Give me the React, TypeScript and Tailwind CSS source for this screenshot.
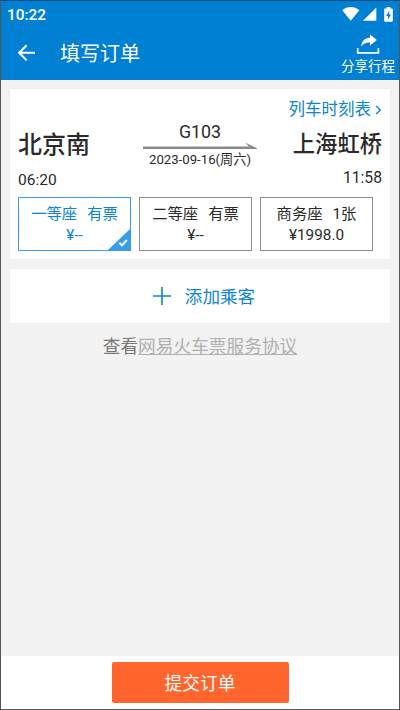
import { useState } from 'react';
import clsx from 'clsx';

interface Seat {
  name: string;
  stock: string;
  price: string;
}

const seats: Seat[] = [
  { name: '一等座', stock: '有票', price: '¥--' },
  { name: '二等座', stock: '有票', price: '¥--' },
  { name: '商务座', stock: '1张', price: '¥1998.0' },
];

function StatusBar() {
  return (
    <div className="flex h-[26px] shrink-0 items-center justify-between px-[6px] text-white">
      <span className="mt-px text-[15.4px] leading-[26px] font-medium">10:22</span>
      <div className="flex items-center">
        <svg width="18" height="14" viewBox="0 0 18 14" fill="currentColor">
          <path d="M0.3 3.2C5.4-1 12.2-1 17.3 3.2L8.8 13.8z" />
        </svg>
        <svg width="14" height="14" viewBox="0 0 14 14" fill="currentColor" className="ml-[3px]">
          <path d="M13.3 0.4v13.4H0z" />
        </svg>
        <svg width="9" height="15" viewBox="0 0 9 15" className="ml-[7px]">
          <path d="M2.6 0h3.8v1.6h1.4c.6 0 1 .4 1 1v11.2c0 .6-.4 1-1 1H1.2c-.6 0-1-.4-1-1V2.6c0-.6.4-1 1-1h1.4z" fill="currentColor" />
          <path d="M5.4 3.8 2 9h2v3.6L7 7.4H5.1z" fill="#0080d3" />
        </svg>
      </div>
    </div>
  );
}

function Header() {
  return (
    <header className="flex h-[53px] shrink-0 text-white">
      <button className="mt-[17px] ml-[17px] h-[18px] w-[18px]">
        <svg width="18" height="18" viewBox="0 0 18 18" fill="none" stroke="currentColor" strokeWidth="2">
          <path d="M17 8.8H1.6M8.7 1.2 1.2 8.8l7.5 7.6" />
        </svg>
      </button>
      <h1 className="ml-[24px] h-[53px] text-[20px] leading-[55px] whitespace-nowrap">填写订单</h1>
      <button className="mr-[4px] ml-auto flex w-[54px] flex-col items-center">
        <svg width="24" height="21" viewBox="0 0 24 21" className="mt-[7px] shrink-0">
          <path d="M5.2 12.4C5.7 7 9 3.8 14 3.7V.5l6.9 5.4-6.9 5.6V8.4c-4-.2-6.6 1-8.8 4z" fill="#fff" />
          <path d="M1.7 14.3v4.500h20.7v-4.500" fill="none" stroke="#fff" strokeWidth="1.7" />
        </svg>
        <span className="mt-px text-[13.5px] leading-[20px] whitespace-nowrap">分享行程</span>
      </button>
    </header>
  );
}

function SeatOption({ seat, selected, onSelect }: { seat: Seat; selected: boolean; onSelect: () => void }) {
  return (
    <button
      onClick={onSelect}
      className={clsx(
        'relative flex h-[54px] w-[113px] flex-col items-center border text-[15.3px]',
        selected ? 'border-[#379de6] text-[#0d84d4]' : 'border-[#909090] text-[#2a2a2a]'
      )}
    >
      <span className="mt-[5px] flex h-[22px] gap-[10px] leading-[22px] whitespace-nowrap">
        <span>{seat.name}</span>
        <span>{seat.stock}</span>
      </span>
      <span className="h-[20px] leading-[20px]">{seat.price}</span>
      {selected && (
        <svg width="22" height="21" viewBox="0 0 22 21" className="absolute right-0 bottom-0">
          <path d="M22 0v21H0z" fill="#379de6" />
          <path d="m11.3 13.7 2.8 2.6 4.7-5.3" fill="none" stroke="#fff" strokeWidth="1.9" />
        </svg>
      )}
    </button>
  );
}

export default function App() {
  const [selected, setSelected] = useState(0);

  return (
    <div className="flex h-[710px] w-[400px] flex-col overflow-hidden border border-[#555] border-t-[#0b4c80] bg-[#f2f2f2] font-[Roboto,'Noto_Sans_CJK_SC',sans-serif] text-[#2a2a2a]">
      <div className="shrink-0 bg-[#0080d3]">
        <StatusBar />
        <Header />
      </div>

      <main className="flex flex-1 flex-col px-[9px] pt-[9px]">
        <section className="flex h-[170px] flex-col bg-white px-[8px] shadow-[0_0_1px_#ddd]">
          <a className="mt-[9px] flex h-[23px] items-center self-end text-[16.5px] leading-[24px] text-[#0d84d4]">
            列车时刻表
            <svg width="7" height="10" viewBox="0 0 7 10" fill="none" stroke="currentColor" strokeWidth="1.4" className="ml-[4px]">
              <path d="m1.2 1 4 4-4 4" />
            </svg>
          </a>

          <div className="flex h-[76px] justify-between">
            <div className="w-[124px]">
              <div className="mt-[8px] h-[32px] text-[24px] leading-[32px] font-medium">北京南</div>
              <div className="mt-[9px] h-[20px] text-[15.5px] leading-[20px]">06:20</div>
            </div>
            <div className="flex w-[116px] flex-col items-center">
              <div className="h-[22px] text-[17.8px] leading-[22px]">G103</div>
              <svg width="114" height="8" viewBox="0 0 114 8" className="mt-[-1px] shrink-0" fill="#888">
                <path d="M0 4.5h106L102 .6 114 6.2v.8H0z" />
              </svg>
              <div className="mt-px h-[18px] text-[13.2px] leading-[18px] whitespace-nowrap">2023-09-16(周六)</div>
            </div>
            <div className="w-[124px] text-right">
              <div className="mt-[8px] h-[30px] text-[22.3px] leading-[30px] font-medium">上海虹桥</div>
              <div className="mt-[9px] h-[20px] text-[15.7px] leading-[20px]">11:58</div>
            </div>
          </div>

          <div className="flex gap-[8px]">
            {seats.map((seat, i) => (
              <SeatOption key={seat.name} seat={seat} selected={i === selected} onSelect={() => setSelected(i)} />
            ))}
          </div>
        </section>

        <button className="mt-[10px] flex h-[54px] items-center justify-center bg-white pl-[8px] text-[#0d84d4] shadow-[0_0_1px_#ddd]">
          <svg width="18" height="18" viewBox="0 0 18 18" fill="none" stroke="currentColor" strokeWidth="1.6">
            <path d="M9 0v18M0 9h18" />
          </svg>
          <span className="mt-[2px] ml-[14px] text-[17.6px]">添加乘客</span>
        </button>

        <p className="mt-[11px] text-center text-[17.7px] leading-[26px] text-[#777]">
          查看<a className="text-[#b0b0b0] underline">网易火车票服务协议</a>
        </p>
      </main>

      <footer className="flex h-[53px] shrink-0 justify-center bg-white pt-[6px]">
        <button className="h-[41px] w-[177px] rounded-[2px] bg-[#ff652d] pt-[3px] text-[17.7px] text-white">提交订单</button>
      </footer>
    </div>
  );
}
